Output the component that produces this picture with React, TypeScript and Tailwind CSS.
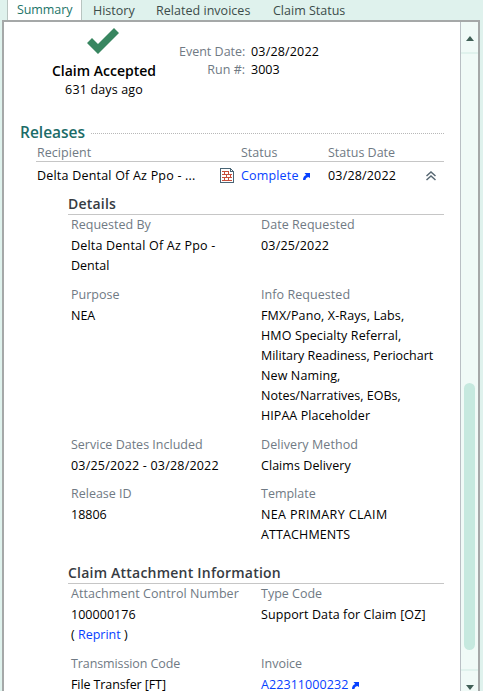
import type { ReactNode } from "react";

function LinkArrow() {
  return (
    <svg className="ml-1 inline-block h-[7px] w-[7px] align-baseline" viewBox="0 0 7 7" fill="none">
      <path d="M1.5 0H7V5L5.2 3.9C3.6 4.3 2.7 5.2 2.4 7H0C0 4.4 1.2 2.9 3.2 2Z" fill="#0741ff" />
    </svg>
  );
}

function Field({ label, labelClass = "", className = "", children }: { label: string; labelClass?: string; className?: string; children: ReactNode }) {
  return (
    <div className={`whitespace-nowrap ${className}`}>
      <div className={`h-[21px] text-[#707a84] ${labelClass}`}>{label}</div>
      {children}
    </div>
  );
}

function SectionTitle({ children, className = "" }: { children: ReactNode; className?: string }) {
  return (
    <h3 className={`h-[21px] border-b border-[#c6c6c6] text-[14px] leading-[20px] font-semibold tracking-[0.22px] text-[#363b42] ${className}`}>
      <span>{children}</span>
    </h3>
  );
}

export default function App() {
  return (
    <div className="flex h-[691px] w-[483px] flex-col overflow-hidden bg-[#dff2ed] font-['Open_Sans','Noto_Sans',sans-serif] text-[12.5px] leading-[20px] text-black">
      <nav className="flex h-5 shrink-0 pl-[7px] leading-[22px] whitespace-nowrap text-[#3c4c4a]">
        <div className="h-5 w-[75px] border-x border-[#b8c4c0] bg-white pl-[9px] leading-[20px] text-[#1c7468]">
          <span className="tracking-[-0.08px]">Summary</span>
        </div>
        <div className="w-[63px] pl-[11px]"><span>History</span></div>
        <div className="w-[117px] pl-[11px]"><span className="tracking-[0.03px]">Related invoices</span></div>
        <div className="pl-[11px]"><span>Claim Status</span></div>
      </nav>
      <main className="ml-[2px] flex h-[671px] w-[478px] border-x-2 border-t-2 border-[#a5a8a8] bg-white">
        <div className="h-[669px] w-[456px] shrink-0 overflow-hidden pl-4">
          <div className="flex h-[100px]">
            <div className="flex w-[159px] flex-col items-center pl-[9px] whitespace-nowrap">
              <svg className="mt-[6px] mr-[2px] h-[26px] w-[32px]" viewBox="0 0 32 26">
                <path d="M0 15L5 10L11 16L27 0L32 5L11 26Z" fill="#388660" />
              </svg>
              <div className="mt-[7px] h-5 text-[14px] leading-[20px] font-semibold"><span>Claim Accepted</span></div>
              <div className="leading-[18px] tracking-[0.15px]"><span>631 days ago</span></div>
            </div>
            <div className="mt-[21px] whitespace-nowrap">
              <div className="flex h-[18px] leading-[18px]"><span className="w-[66px] shrink-0 text-right text-[#707a84]">Event Date:</span><span className="ml-[6px] tracking-[0.17px]">03/28/2022</span></div>
              <div className="flex h-[18px] leading-[18px]"><span className="w-[66px] shrink-0 text-right text-[#707a84]">Run #:</span><span className="ml-[6px]">3003</span></div>
            </div>
          </div>
          <div className="mr-4 flex h-5 items-center">
            <h2 className="w-[71px] text-[15.5px] font-semibold text-[#1c6c68]"><span>Releases</span></h2>
            <div className="mt-[2px] flex-1 border-t border-dotted border-[#b8b8b8]" />
          </div>
          <div className="mr-4 ml-4 flex h-5 border-b border-[#c6c6c6] pl-[1px] leading-[22px] text-[#707a84]">
            <span className="w-[204px] tracking-[0.05px]">Recipient</span><span className="w-[87px]">Status</span><span>Status Date</span>
          </div>
          <div className="mr-4 ml-4 flex h-[32px] pt-[4px] pl-[1px] whitespace-nowrap">
            <span className="w-[184px] tracking-[0.21px]">Delta Dental Of Az Ppo - ...</span>
            <svg className="mt-[1px] -ml-[1px] h-4 w-[14px]" viewBox="0 0 14 16" fill="none" shapeRendering="crispEdges">
              <path d="M2 4.5H9M2 7.5H12M2 10.5H12M2 13.5H12M4.5 5V7M8.5 5V7M6.5 8V10M10.5 8V10M4.5 11V13M8.5 11V13" stroke="#c8503c" />
              <path d="M.5 1.5H10.5V4.5H13.5V15.5H.5ZM11 2.5H12M12 3.5H13" stroke="#496575" />
            </svg>
            <span className="ml-[7px] w-[87px] text-[#0741ff]"><span className="tracking-[0.17px]">Complete</span><LinkArrow /></span>
            <span className="w-[98px] tracking-[0.17px]">03/28/2022</span>
            <svg className="mt-[5px] h-[10px] w-[10px]" viewBox="0 0 10 10" fill="none" stroke="#586873" strokeWidth="1.5">
              <path d="M.5 5L5 1L9.5 5M.5 9L5 5L9.5 9" />
            </svg>
          </div>
          <div className="mr-4 ml-12">
            <SectionTitle>Details</SectionTitle>
            <div className="grid grid-cols-[190px_1fr] gap-y-[9px] pl-[3px]">
              <Field label="Requested By"><div className="tracking-[0.2px]">Delta Dental Of Az Ppo -</div><div>Dental</div></Field>
              <Field label="Date Requested" labelClass="tracking-[0.06px]"><div className="tracking-[0.17px]">03/25/2022</div></Field>
              <Field label="Purpose"><div>NEA</div></Field>
              <Field label="Info Requested" labelClass="tracking-[0.06px]">
                <div className="tracking-[0.12px]">FMX/Pano, X-Rays, Labs,</div>
                <div className="tracking-[0.12px]">HMO Specialty Referral,</div>
                <div className="tracking-[-0.02px]">Military Readiness, Periochart</div>
                <div className="tracking-[0.12px]">New Naming,</div>
                <div>Notes/Narratives, EOBs,</div>
                <div className="tracking-[0.06px]">HIPAA Placeholder</div>
              </Field>
              <Field label="Service Dates Included"><div className="tracking-[0.2px]">03/25/2022 - 03/28/2022</div></Field>
              <Field label="Delivery Method" labelClass="tracking-[0.08px]"><div className="tracking-[0.05px]">Claims Delivery</div></Field>
              <Field className="-mt-[1px]" label="Release ID"><div>18806</div></Field>
              <Field className="-mt-[1px]" label="Template"><div className="tracking-[0.36px]">NEA PRIMARY CLAIM</div><div className="tracking-[0.12px]">ATTACHMENTS</div></Field>
            </div>
            <SectionTitle className="mt-[18px]">Claim Attachment Information</SectionTitle>
            <div className="grid grid-cols-[190px_1fr] gap-y-[9px] pl-[3px]">
              <Field label="Attachment Control Number" labelClass="tracking-[0.06px]"><div className="tracking-[0.03px]">100000176</div><div>( <span className="text-[#0741ff]">Reprint</span> )</div></Field>
              <Field label="Type Code"><div className="tracking-[0.1px]">Support Data for Claim [OZ]</div></Field>
              <Field label="Transmission Code" labelClass="tracking-[-0.1px]"><div className="tracking-[-0.1px]">File Transfer [FT]</div></Field>
              <Field label="Invoice"><div className="text-[#0741ff]"><span className="tracking-[0.07px]">A22311000232</span><LinkArrow /></div></Field>
            </div>
          </div>
        </div>
        <div className="flex h-[669px] w-[18px] shrink-0 flex-col items-center border-l border-[#b9bfc4] bg-[#f0faf7]">
          <div className="flex h-8 w-full justify-center border-b-2 border-[#e0f2ed] pt-[14px]">
            <svg className="h-[5px] w-2" viewBox="0 0 8 5"><path d="M0 5L4 0L8 5Z" fill="#405f56" /></svg>
          </div>
          <div className="mt-[329px] h-[267px] w-[11px] rounded-full bg-[#c6e9df]" />
          <div className="mt-[19px] flex h-[22px] w-full justify-center border-t-2 border-[#e0f2ed] pt-[14px]">
            <svg className="h-[5px] w-2" viewBox="0 0 8 5"><path d="M0 0H8L4 5Z" fill="#405f56" /></svg>
          </div>
        </div>
      </main>
    </div>
  );
}
